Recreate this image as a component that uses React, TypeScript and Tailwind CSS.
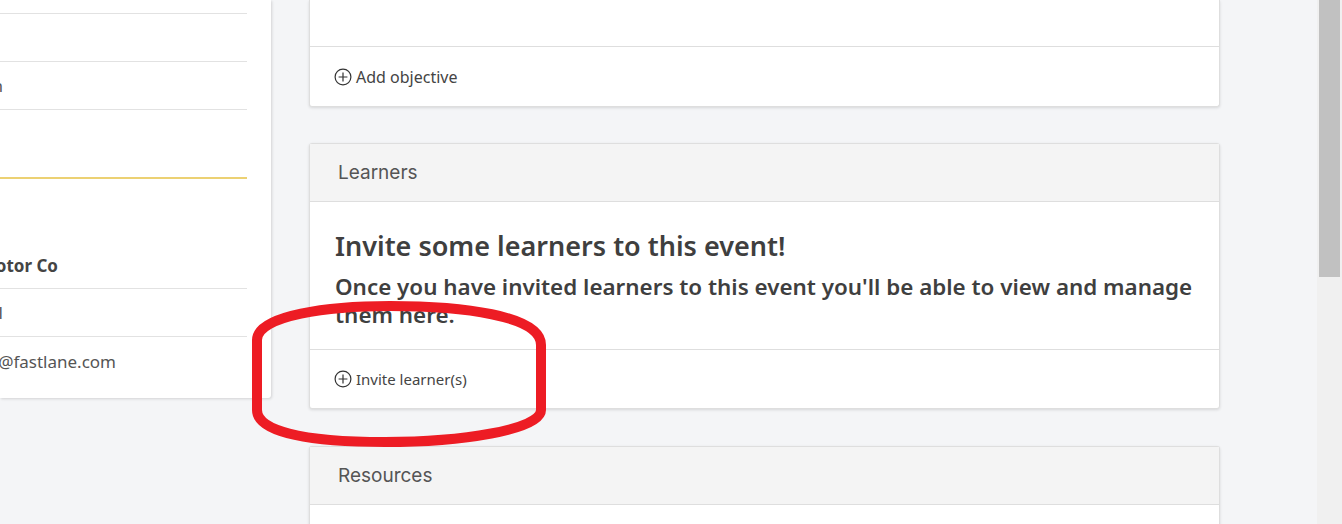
import React from "react";

function CirclePlus() {
  return (
    <svg width="18" height="18" viewBox="0 0 18 18" fill="none" className="shrink-0">
      <circle cx="9" cy="9" r="7.9" stroke="#333" strokeWidth="1.2" />
      <path d="M9 4.6V13.4M4.6 9H13.4" stroke="#333" strokeWidth="1.2" />
    </svg>
  );
}

const body = { fontFamily: '"Noto Sans", "Open Sans", sans-serif' };
const head = { fontFamily: 'Inter, "Noto Sans", sans-serif' };

export default function App() {
  return (
    <div className="relative flex h-[524px] w-[1342px] overflow-hidden bg-[#f4f5f7]" style={body}>
      <div className="flex flex-1 items-start">
        {/* Left panel (cut off on the left) */}
        <div className="w-[271px] shrink-0 overflow-hidden rounded-br-[3px] bg-white pr-[24px] shadow-[1px_1px_3px_rgba(0,0,0,0.14)]">
          <div className="h-[14px] border-b border-[#e2e2e2]" />
          <div className="h-[48px] border-b border-[#e2e2e2]" />
          <div className="flex h-[48px] items-center border-b border-[#e2e2e2] text-[17px] text-[#555]">
            <div className="flex w-[3px] justify-end whitespace-nowrap">Administration</div>
          </div>
          <div className="h-[67px]" />
          <div className="h-[2px] bg-[#ecd173]" />
          <div className="flex h-[110px] items-end border-b border-[#e2e2e2] pb-[10px] text-[17px] font-bold text-[#444]">
            <div className="flex w-[58px] justify-end whitespace-nowrap">Fastlane Motor Co</div>
          </div>
          <div className="flex h-[48px] items-center border-b border-[#e2e2e2] text-[17px] text-[#555]">
            <div className="flex w-[3px] justify-end whitespace-nowrap">Michael</div>
          </div>
          <div className="flex h-[61px] items-center pb-[12px] text-[17px] text-[#555]">
            <div className="flex w-[116px] justify-end whitespace-nowrap">training@fastlane.com</div>
          </div>
        </div>

        {/* Main column */}
        <div className="ml-[38px] flex w-[911px] shrink-0 flex-col">
          {/* Objectives card (top cut off) */}
          <div className="rounded-b-[3px] border border-t-0 border-[#dedede] bg-white shadow-[0_1px_3px_rgba(0,0,0,0.12)]">
            <div className="h-[47px] border-b border-[#dedede]" />
            <div className="flex h-[59px] items-center gap-[4px] px-[24px] text-[16px] text-[#444]">
              <CirclePlus />
              <span>Add objective</span>
            </div>
          </div>

          {/* Learners card */}
          <div className="mt-[36px] rounded-[3px] border border-[#dedede] bg-white shadow-[0_1px_3px_rgba(0,0,0,0.12)]">
            <div className="flex h-[58px] items-center border-b border-[#dedede] bg-[#f4f4f4] pt-[1px] px-[28px] text-[19px] text-[#555]" style={head}>
              Learners
            </div>
            <div className="h-[148px] border-b border-[#dedede] px-[25px] pt-[28px]">
              <h2 className="text-[27px] font-semibold leading-[32px] text-[#3f3f3f]">
                Invite some learners to this event!
              </h2>
              <p className="mt-[11px] text-[22.4px] font-semibold leading-[28px] text-[#3f3f3f]">
                Once you have invited learners to this event you'll be able to view and manage
                <br />
                them here.
              </p>
            </div>
            <div className="flex h-[58px] items-center gap-[4px] px-[24px] text-[15px] text-[#444]">
              <CirclePlus />
              <span>Invite learner(s)</span>
            </div>
          </div>

          {/* Resources card */}
          <div className="mt-[37px] rounded-t-[3px] border border-b-0 border-[#dedede] bg-white shadow-[0_1px_3px_rgba(0,0,0,0.12)]">
            <div className="flex h-[58px] items-center border-b border-[#dedede] bg-[#f4f4f4] pt-[1px] px-[28px] text-[19px] text-[#555]" style={head}>
              Resources
            </div>
            <div className="h-[60px]" />
          </div>
        </div>
      </div>

      {/* Scrollbar */}
      <div className="flex h-full w-[25px] shrink-0 justify-center bg-[#f0f0f0]">
        <div className="h-[277px] w-[21px] bg-[#c1c1c1]" />
      </div>

      {/* Red annotation */}
      <svg className="pointer-events-none absolute left-0 top-0" width="1342" height="524" viewBox="0 0 1342 524">
        <path
          d="M257,340 C257,315 330,306 390,306 C460,306 541,315 541,345 L541,410 C541,430 460,442 385,442 C300,442 257,430 257,410 Z"
          fill="none"
          stroke="#ed1c24"
          strokeWidth="10"
        />
      </svg>
    </div>
  );
}
